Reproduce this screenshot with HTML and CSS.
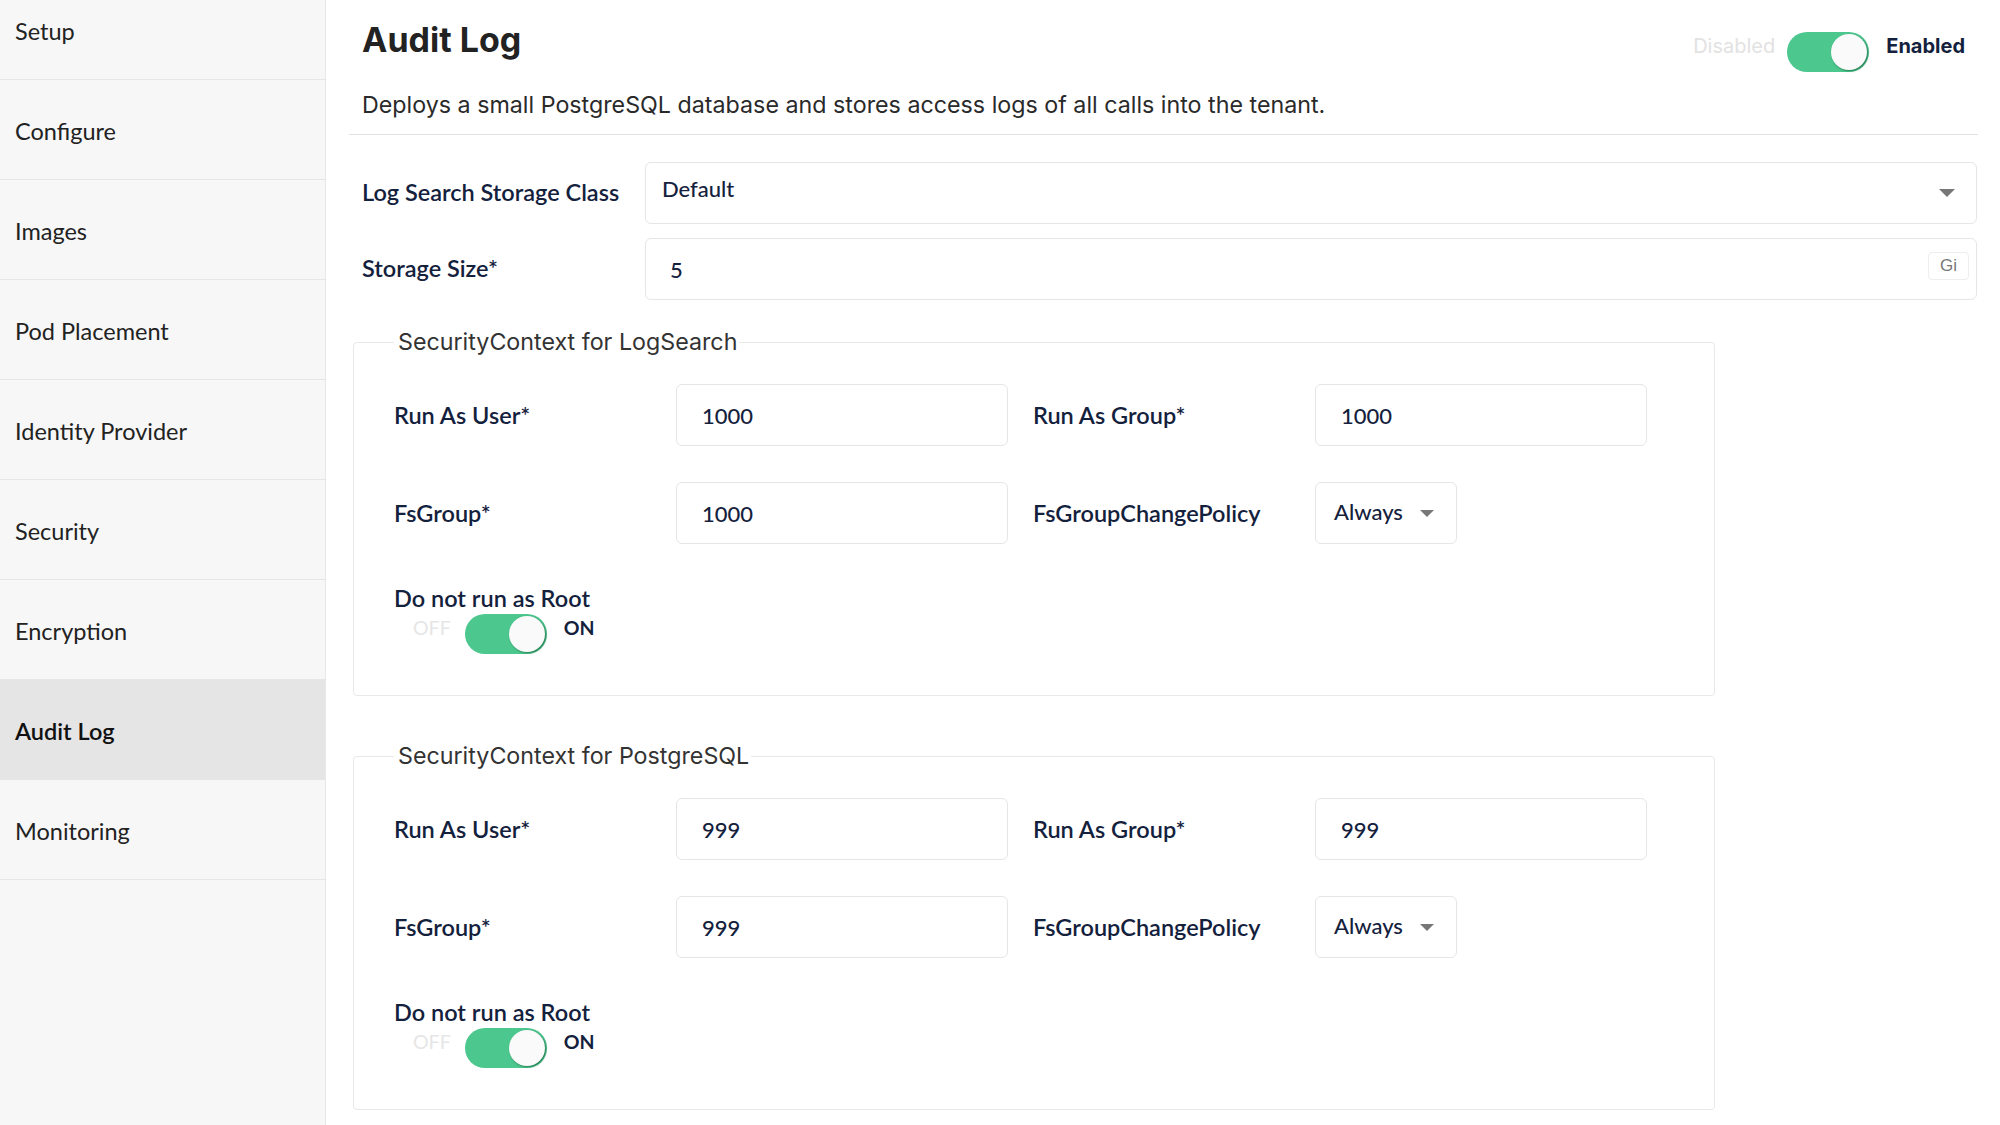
FILE: index.html
```html
<!DOCTYPE html>
<html lang="en">
<head>
<meta charset="utf-8">
<title>Audit Log</title>
<link rel="stylesheet" href="styles.css">
</head>
<body>
<div class="app">
  <nav class="sidebar">
    <ul class="nav">
      <li class="nav-item">Setup</li>
      <li class="nav-item">Configure</li>
      <li class="nav-item">Images</li>
      <li class="nav-item">Pod Placement</li>
      <li class="nav-item">Identity Provider</li>
      <li class="nav-item">Security</li>
      <li class="nav-item">Encryption</li>
      <li class="nav-item active">Audit Log</li>
      <li class="nav-item">Monitoring</li>
    </ul>
  </nav>
  <main class="main">
    <header class="page-header">
      <div class="title-row">
        <h1 class="title">Audit Log</h1>
        <div class="switch-group">
          <span class="switch-label off">Disabled</span>
          <span class="switch"><span class="knob"></span></span>
          <span class="switch-label on">Enabled</span>
        </div>
      </div>
      <p class="desc">Deploys a small PostgreSQL database and stores access logs of all calls into the tenant.</p>
    </header>

    <section class="form">
      <div class="form-row">
        <span class="label">Log Search Storage Class</span>
        <div class="field select-field">
          <span class="value">Default</span>
          <span class="caret big"></span>
        </div>
      </div>
      <div class="form-row">
        <span class="label">Storage Size*</span>
        <div class="field input-field">
          <span class="value">5</span>
          <span class="unit">Gi</span>
        </div>
      </div>
    </section>

    <fieldset class="ctx">
      <legend>SecurityContext for LogSearch</legend>
      <div class="ctx-grid">
        <span class="label">Run As User*</span>
        <div class="field input-field"><span class="value">1000</span></div>
        <span class="label">Run As Group*</span>
        <div class="field input-field"><span class="value">1000</span></div>
        <span class="label">FsGroup*</span>
        <div class="field input-field"><span class="value">1000</span></div>
        <span class="label">FsGroupChangePolicy</span>
        <div class="field policy-field"><span class="value">Always</span><span class="caret"></span></div>
      </div>
      <div class="root-block">
        <div class="label">Do not run as Root</div>
        <div class="toggle-row">
          <span class="tlabel off">OFF</span>
          <span class="switch"><span class="knob"></span></span>
          <span class="tlabel on">ON</span>
        </div>
      </div>
    </fieldset>

    <fieldset class="ctx">
      <legend>SecurityContext for PostgreSQL</legend>
      <div class="ctx-grid">
        <span class="label">Run As User*</span>
        <div class="field input-field"><span class="value">999</span></div>
        <span class="label">Run As Group*</span>
        <div class="field input-field"><span class="value">999</span></div>
        <span class="label">FsGroup*</span>
        <div class="field input-field"><span class="value">999</span></div>
        <span class="label">FsGroupChangePolicy</span>
        <div class="field policy-field"><span class="value">Always</span><span class="caret"></span></div>
      </div>
      <div class="root-block">
        <div class="label">Do not run as Root</div>
        <div class="toggle-row">
          <span class="tlabel off">OFF</span>
          <span class="switch"><span class="knob"></span></span>
          <span class="tlabel on">ON</span>
        </div>
      </div>
    </fieldset>
  </main>
</div>
</body>
</html>
```

FILE: styles.css
```css
* { box-sizing: border-box; }
html, body { margin: 0; padding: 0; }
body {
  font-family: Lato, "Noto Sans", sans-serif;
  background: #fff;
  color: #222;
  overflow: hidden;
}
.app {
  display: flex;
  height: 1125px;
}

/* Sidebar */
.sidebar {
  width: 326px;
  flex: none;
  background: #f7f7f7;
  border-right: 1px solid #e8e8e8;
  overflow: hidden;
}
.nav {
  list-style: none;
  margin: -20px 0 0;
  padding: 0;
}
.nav-item {
  height: 100px;
  display: flex;
  align-items: center;
  padding: 2px 0 0 15px;
  border-bottom: 1px solid #e6e6e6;
  font-size: 23.5px;
  color: #222;
}
.nav-item.active {
  background: #e5e5e5;
  color: #111;
  font-weight: 600;
}

/* Main */
.main {
  flex: 1;
  min-width: 0;
  padding: 0 22px 0 23px;
}
.page-header {
  padding: 20px 13px 14px;
  border-bottom: 1px solid #e2e2e2;
}
.title-row {
  display: flex;
  justify-content: space-between;
  align-items: flex-start;
}
.title {
  margin: 0;
  font-family: Inter, "Liberation Sans", sans-serif;
  font-weight: 700;
  font-size: 34px;
  line-height: 40px;
  color: #222;
}
.switch-group {
  display: flex;
  align-items: center;
  margin-top: 12px;
  margin-right: 0;
  font-family: Inter, "Liberation Sans", sans-serif;
  font-size: 20px;
}
.switch-label.off {
  color: #e2e2e2;
  margin-right: 12px;
  margin-top: -12px;
}
.switch-label.on {
  color: #14213d;
  font-weight: 700;
  margin-left: 17px;
  margin-top: -12px;
}
.desc {
  margin: 18px 0 0;
  font-family: Inter, "Liberation Sans", sans-serif;
  font-size: 23.25px;
  line-height: 30px;
  color: #2a2a2a;
}

/* Switch */
.switch {
  position: relative;
  display: inline-block;
  width: 82px;
  height: 40px;
  border-radius: 20px;
  background: #4cc78e;
  flex: none;
}
.knob {
  position: absolute;
  top: 2px;
  right: 2px;
  width: 36px;
  height: 36px;
  border-radius: 50%;
  background: #fafafa;
  box-shadow: 1px 1px 2px rgba(0, 60, 30, 0.55);
}

/* Form */
.form {
  padding: 27px 1px 0 13px;
  display: flex;
  flex-direction: column;
  gap: 14px;
}
.form-row {
  display: grid;
  grid-template-columns: 283px 1fr;
  align-items: center;
}
.form-row .label {
  margin-top: -3px;
}
.label {
  font-size: 23.5px;
  font-weight: 600;
  color: #14213d;
}
.field {
  height: 62px;
  border: 1px solid #e6e6e6;
  border-radius: 6px;
  background: #fff;
  display: flex;
  align-items: center;
  font-size: 22px;
  font-weight: 500;
  color: #14213d;
}
.select-field {
  padding: 0 21px 0 16px;
  justify-content: space-between;
}
.select-field .value { margin-top: -10px; }
.input-field {
  padding: 0 7px 0 24px;
  justify-content: space-between;
}
.unit {
  font-family: "Liberation Sans", Arial, sans-serif;
  font-weight: 400;
  font-size: 17px;
  color: #777;
  border: 1px solid #eee;
  border-radius: 4px;
  width: 41px;
  height: 28px;
  display: flex;
  align-items: center;
  justify-content: center;
  margin-top: -6px;
}
.caret {
  width: 0;
  height: 0;
  border-left: 7px solid transparent;
  border-right: 7px solid transparent;
  border-top: 7px solid #777;
}
.caret.big {
  border-left-width: 8px;
  border-right-width: 8px;
  border-top-width: 8px;
}

/* Fieldsets */
.ctx {
  width: fit-content;
  margin: 27px 0 0 4px;
  padding: 27px 67px 41px 40px;
  border: 1px solid #e8e8e8;
  border-radius: 4px;
}
.ctx + .ctx {
  margin-top: 45px;
}
.ctx legend {
  padding: 0 2px 0 4px;
  font-family: Inter, "Liberation Sans", sans-serif;
  font-size: 23.25px;
  line-height: 30px;
  color: #333;
}
.ctx-grid {
  display: grid;
  grid-template-columns: 257px 332px 257px 332px;
  column-gap: 25px;
  row-gap: 36px;
  align-items: center;
}
.ctx-grid .input-field {
  padding-left: 25px;
}
.policy-field {
  width: 142px;
  padding-left: 18px;
  gap: 17px;
}
.policy-field .value { margin-top: -4px; }
.root-block {
  margin-top: 41px;
}
.root-block .label {
  line-height: 26px;
}
.toggle-row {
  display: flex;
  align-items: center;
  margin-top: 3px;
  padding-left: 19px;
}
.tlabel {
  font-size: 19.5px;
  margin-top: -13px;
}
.tlabel.off {
  color: #e6e6e6;
  margin-right: 14px;
}
.tlabel.on {
  color: #14213d;
  font-weight: 700;
  margin-left: 17px;
}
```
